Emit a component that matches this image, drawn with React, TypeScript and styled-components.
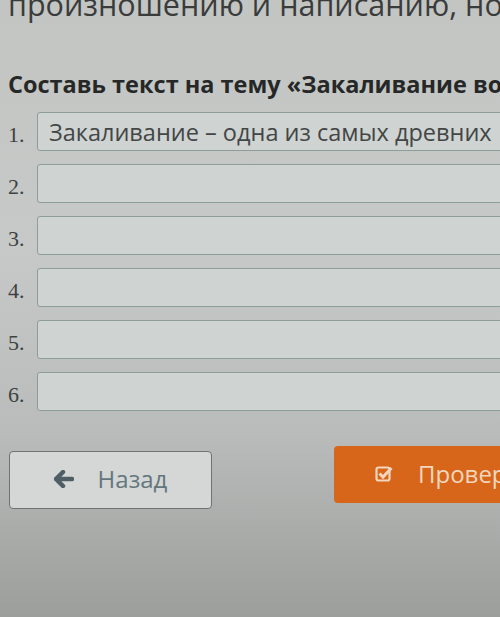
import * as React from 'react';
import styled, { createGlobalStyle } from 'styled-components';

const GlobalStyle = createGlobalStyle`
  html, body {
    margin: 0;
    padding: 0;
  }
  body {
    width: 500px;
    height: 617px;
    overflow: hidden;
    background: linear-gradient(180deg, #c3c5c3 0%, #c6c9c7 40%, #b9bcba 70%, #9c9e9c 100%);
    font-family: 'Open Sans', 'Noto Sans', sans-serif;
  }
`;

const Page = styled.div`
  width: 500px;
  height: 617px;
  overflow: hidden;
  padding-left: 8px;
  box-sizing: border-box;
`;

const Lead = styled.p`
  margin: -13px 0 0;
  font-size: 30.5px;
  line-height: 34px;
  color: #3a3c3c;
  white-space: nowrap;
`;

const Heading = styled.h2`
  margin: 48px 0 0;
  font-size: 23.5px;
  font-weight: 700;
  line-height: 30px;
  color: #262828;
  white-space: nowrap;
`;

const List = styled.ol`
  list-style: none;
  margin: 13px 0 0;
  padding: 0;
  display: flex;
  flex-direction: column;
  gap: 13px;
`;

const Row = styled.li`
  display: flex;
  align-items: flex-end;
  gap: 6px;
`;

const Number = styled.span`
  width: 23px;
  font-family: 'Liberation Serif', 'DejaVu Serif', serif;
  font-size: 22px;
  line-height: 22px;
  color: #3e4242;
  padding-bottom: 5px;
  flex-shrink: 0;
`;

const Field = styled.div`
  flex: 0 0 560px;
  height: 39px;
  box-sizing: border-box;
  border: 1px solid #8d9d97;
  border-radius: 3px;
  background: #cfd3d1;
  padding: 0 11px;
  display: flex;
  align-items: center;
  font-size: 23.5px;
  color: #424646;
  white-space: nowrap;
`;

const Actions = styled.div`
  display: flex;
  align-items: flex-start;
  margin-top: 35px;
  padding-left: 1px;
  gap: 122px;
`;

const BackButton = styled.button`
  flex: 0 0 203px;
  height: 58px;
  margin-top: 5px;
  border: 1.5px solid #6e7472;
  border-radius: 4px;
  background: #d4d7d5;
  display: flex;
  align-items: center;
  justify-content: center;
  gap: 24px;
  font-family: inherit;
  font-size: 24px;
  color: #64767d;
  padding: 0 0 3px;
`;

const CheckButton = styled.button`
  flex: 0 0 200px;
  height: 57px;
  border: none;
  border-radius: 4px;
  background: #d8661a;
  display: flex;
  align-items: center;
  gap: 25px;
  padding: 0 0 3px 41px;
  font-family: inherit;
  font-size: 24px;
  color: #f2d6be;
  white-space: nowrap;
  overflow: hidden;
`;

const rows = ['Закаливание – одна из самых древних', '', '', '', '', ''];

export default function App() {
  return (
    <>
      <GlobalStyle />
      <Page>
        <Lead>произношению и написанию, но</Lead>
        <Heading>Составь текст на тему «Закаливание во</Heading>
        <List>
          {rows.map((text, i) => (
            <Row key={i}>
              <Number>{i + 1}.</Number>
              <Field>{text}</Field>
            </Row>
          ))}
        </List>
        <Actions>
          <BackButton>
            <svg width="20" height="18" viewBox="0 0 20 18">
              <path d="M9 2 L2 9 L9 16 M2 9 H18" fill="none" stroke="#4f5e64" strokeWidth="4.5" strokeLinejoin="round" strokeLinecap="round" />
            </svg>
            Назад
          </BackButton>
          <CheckButton>
            <svg width="18" height="17" viewBox="0 0 18 17">
              <rect x="1.5" y="2.5" width="13" height="13" rx="2" fill="none" stroke="#f2d6be" strokeWidth="2.2" />
              <path d="M4.5 8.5 L8 12 L16.5 3" fill="none" stroke="#f2d6be" strokeWidth="3" />
            </svg>
            Провер
          </CheckButton>
        </Actions>
      </Page>
    </>
  );
}
